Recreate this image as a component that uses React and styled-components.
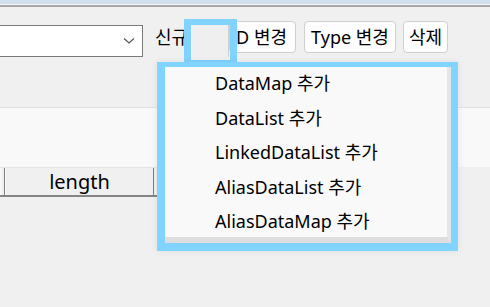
import React from 'react';
import styled, { createGlobalStyle } from 'styled-components';

const GlobalStyle = createGlobalStyle`
  html, body {
    margin: 0;
    padding: 0;
    background: #f0f0f0;
    overflow: hidden;
  }
  body {
    font-family: "Noto Sans", "Noto Sans CJK KR", sans-serif;
    color: #000;
  }
`;

const menuItems = [
  'DataMap 추가',
  'DataList 추가',
  'LinkedDataList 추가',
  'AliasDataList 추가',
  'AliasDataMap 추가',
];

const App = () => {
  return (
    <>
      <GlobalStyle />
      <Window>
        <TitleStrip />
        <Toolbar>
          <Combo>
            <svg width="12" height="8" viewBox="0 0 12 8">
              <path d="M1 1.5 L6 6 L11 1.5" fill="none" stroke="#555" strokeWidth="1.2" />
            </svg>
          </Combo>
          <Label>신규</Label>
          <PressedButton />
          <ToolButton $width={67} $offset={0} $shift={12}>ID 변경</ToolButton>
          <ToolButton $width={92} $offset={8}>Type 변경</ToolButton>
          <ToolButton $width={45} $offset={7}>삭제</ToolButton>
        </Toolbar>
        <Panel />
        <HeaderRow>
          <HeaderCell $width={5} />
          <HeaderCell $width={149}>length</HeaderCell>
        </HeaderRow>

        <ButtonHighlight />
        <Menu>
          <MenuList>
            {menuItems.map((item) => (
              <MenuItem key={item}>{item}</MenuItem>
            ))}
          </MenuList>
        </Menu>
      </Window>
    </>
  );
};

const Window = styled.div`
  position: relative;
  width: 490px;
  height: 307px;
  overflow: hidden;
  background: #f0f0f0;
`;

const TitleStrip = styled.div`
  height: 4px;
  background: #d3dfee;
  border-bottom: 1px solid #f4f6f9;
  box-shadow: 0 2px 0 #a7a7a7;
  margin-bottom: 2px;
`;

const Toolbar = styled.div`
  display: flex;
  align-items: flex-start;
  box-sizing: border-box;
  height: 101px;
  padding-top: 14px;
  border-bottom: 1px solid #e2e2e2;
`;

const Combo = styled.div`
  box-sizing: border-box;
  width: 153px;
  height: 32px;
  margin-left: -10px;
  margin-top: 4px;
  background: #fff;
  border: 1px solid #7a7a7a;
  display: flex;
  align-items: center;
  justify-content: flex-end;
  padding-right: 7px;
`;

const Label = styled.div`
  width: 36px;
  margin-left: 12px;
  margin-top: 3px;
  font-size: 18px;
  line-height: 26px;
  white-space: nowrap;
`;

const PressedButton = styled.div`
  box-sizing: border-box;
  width: 38px;
  height: 32px;
  margin-top: 4px;
  background: #efefef;
  border-left: 1px solid #fafafa;
  border-right: 1px solid #cfcfcf;
`;

const ToolButton = styled.button`
  box-sizing: border-box;
  width: ${(p) => p.$width}px;
  height: 32px;
  margin-left: ${(p) => p.$offset}px;
  padding: 0 ${(p) => p.$shift || 0}px 0 0;
  background: #fdfdfd;
  border: 1px solid #d0d0d0;
  border-radius: 4px;
  font-family: inherit;
  font-size: 18px;
  line-height: 1;
  color: #000;
  white-space: nowrap;
  overflow: hidden;
`;

const Panel = styled.div`
  height: 59px;
  background: #f9f9f9;
`;

const HeaderRow = styled.div`
  display: flex;
  width: 157px;
  height: 30px;
  box-sizing: border-box;
  border-top: 1px solid #e4e4e4;
  border-bottom: 2px solid #858585;
`;

const HeaderCell = styled.div`
  box-sizing: border-box;
  width: ${(p) => p.$width}px;
  height: 100%;
  border-right: 1px solid #7e7e7e;
  border-left: 1px solid #fbfbfb;
  display: flex;
  align-items: center;
  justify-content: center;
  font-size: 20px;
  line-height: 1;
`;

const ButtonHighlight = styled.div`
  position: absolute;
  left: 184px;
  top: 19px;
  width: 53px;
  height: 48px;
  box-sizing: border-box;
  border: 7px solid #80d4ff;
  border-top-width: 6px;
`;

const Menu = styled.div`
  position: absolute;
  left: 157px;
  top: 62px;
  width: 301px;
  height: 189px;
  box-sizing: border-box;
  border-style: solid;
  border-color: #80d4ff;
  border-width: 5px 7px 8px 8px;
  box-shadow: 0 0 8px rgba(0, 0, 0, 0.08);
  background: #f9f9f9;
  overflow: hidden;
`;

const MenuList = styled.div`
  box-sizing: border-box;
  height: 100%;
  background: #f9f9f9;
  border-right: 4px solid #e6e6e6;
  border-bottom: 6px solid #dedede;
  display: flex;
  flex-direction: column;
`;

const MenuItem = styled.div`
  flex: none;
  height: 34.5px;
  display: flex;
  align-items: center;
  padding-left: 50px;
  font-size: 18px;
  line-height: 1;

  &:first-child {
    margin-top: -1px;
  }
`;

export default App;
